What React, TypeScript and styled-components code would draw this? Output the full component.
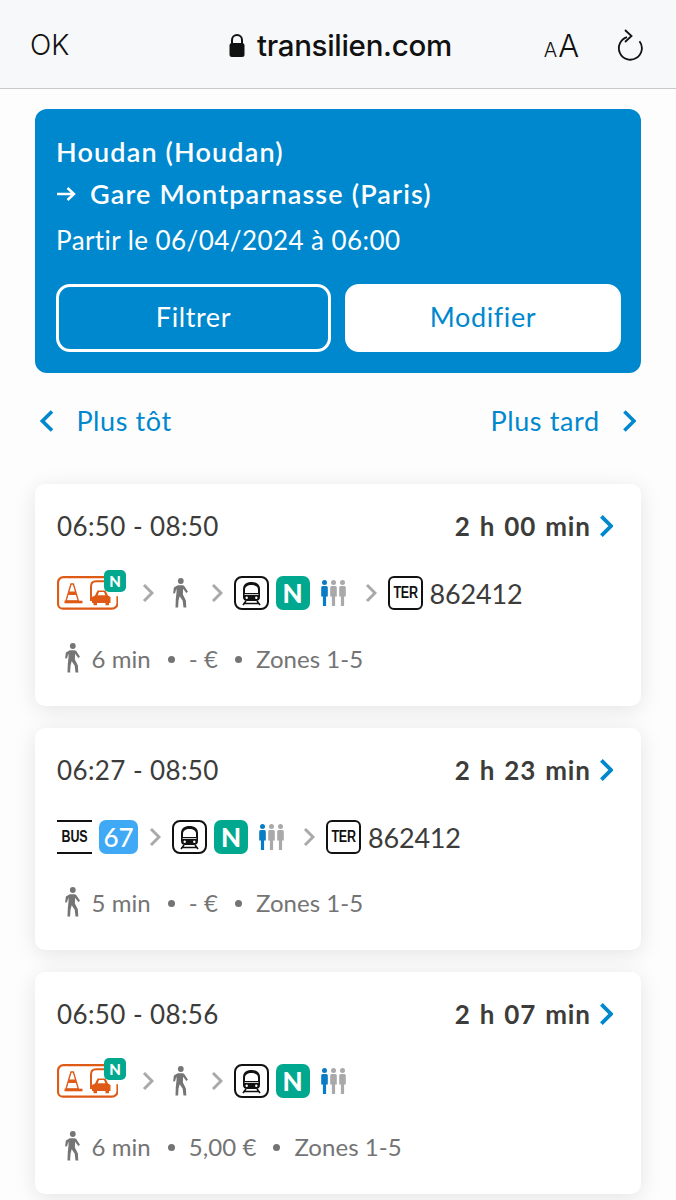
import React from 'react';
import styled, { createGlobalStyle } from 'styled-components';

const GlobalStyle = createGlobalStyle`
  html, body {
    margin: 0;
    background: #fdfdfd;
    font-family: 'Lato', 'Noto Sans', sans-serif;
  }
`;

const Page = styled.div`
  width: 676px;
`;

const BrowserBar = styled.header`
  height: 89px;
  box-sizing: border-box;
  border-bottom: 1px solid #c9c9cb;
  background: #f7f8f9;
  display: flex;
  align-items: center;
  padding: 2px 33px 0 30px;
  color: #111;
  font-family: 'Inter', 'Liberation Sans', sans-serif;
`;

const DoneLabel = styled.span`
  font-size: 28px;
  font-weight: 300;
  width: 199px;
`;

const Address = styled.div`
  display: flex;
  align-items: center;
  gap: 12px;
  font-size: 29.5px;
  font-weight: 500;
  letter-spacing: -0.3px;
  flex: 1;
`;

const TextSize = styled.span`
  font-size: 31px;
  font-weight: 300;
  margin-right: 38px;

  small {
    font-size: 20px;
    margin-right: 1px;
  }
`;

const Content = styled.main`
  padding: 20px 35px 6px;
  display: flex;
  flex-direction: column;
`;

const SearchPanel = styled.section`
  background: #0088ce;
  border-radius: 12px;
  height: 264px;
  box-sizing: border-box;
  padding: 25px 21px 0;
  color: #fff;
`;

const RouteLine = styled.div`
  font-size: 27px;
  font-weight: 600;
  line-height: 36px;
  margin-bottom: 6px;
  display: flex;
  align-items: center;
  gap: 14px;
  letter-spacing: 1.15px;
`;

const DateLine = styled.div`
  font-size: 26px;
  line-height: 36px;
  margin-top: 10px;
  letter-spacing: 0.43px;
`;

const Buttons = styled.div`
  display: grid;
  grid-template-columns: 275px 276px;
  gap: 14px;
  margin-top: 26px;
`;

const PanelButton = styled.button<{ $solid?: boolean }>`
  height: 68px;
  border-radius: 14px;
  border: 3px solid #fff;
  background: ${(p) => (p.$solid ? '#fff' : 'transparent')};
  color: ${(p) => (p.$solid ? '#0088ce' : '#fff')};
  font-family: inherit;
  font-size: 27px;
  letter-spacing: 0.6px;
  padding: 0 0 4px;
`;

const Pager = styled.nav`
  display: flex;
  justify-content: space-between;
  align-items: center;
  height: 40px;
  margin: 28px 0 43px;
  padding: 0 5px;
  color: #0088ce;
  font-size: 27px;
  letter-spacing: 0.6px;
`;

const PagerLink = styled.span`
  display: flex;
  align-items: center;
  gap: 22px;
  line-height: 38px;
`;

const Journeys = styled.div`
  display: flex;
  flex-direction: column;
  gap: 22px;
`;

const Card = styled.article`
  background: #fff;
  border-radius: 10px;
  box-shadow: 0 4px 22px rgba(0, 0, 0, 0.1);
  height: 222px;
  box-sizing: border-box;
  padding: 26px 28px 0 22px;
  color: #3c3c3b;
`;

const CardHead = styled.div`
  display: flex;
  justify-content: space-between;
  align-items: center;
  height: 32px;
  font-size: 26px;
  letter-spacing: 0.4px;
`;

const Duration = styled.span`
  display: flex;
  align-items: center;
  gap: 8px;
  font-weight: 700;
  letter-spacing: 0.8px;
  word-spacing: 2px;
`;

const Steps = styled.div`
  display: flex;
  align-items: center;
  gap: 11px;
  height: 36px;
  margin-top: 33px;
`;

const Pair = styled.span`
  display: flex;
  align-items: center;
  gap: 7px;
`;

const LineBadge = styled.span<{ $bg: string; $size?: number }>`
  display: flex;
  align-items: center;
  justify-content: center;
  width: ${(p) => (p.$size === 67 ? 39 : 34)}px;
  height: 34px;
  border-radius: 7px;
  background: ${(p) => p.$bg};
  color: #fff;
  font-size: ${(p) => (p.$size === 67 ? 26 : 26)}px;
  font-weight: ${(p) => (p.$size === 67 ? 500 : 900)};
`;

const TrainNumber = styled.span`
  font-size: 27px;
  letter-spacing: -0.2px;
`;

const TerBadge = styled.span`
  width: 35px;
  height: 34px;
  box-sizing: border-box;
  border: 2px solid #111;
  border-radius: 6px;
  display: flex;
  align-items: center;
  justify-content: center;
  color: #111;
`;

const BusMark = styled.span`
  width: 35px;
  height: 34px;
  box-sizing: border-box;
  border-top: 2px solid #111;
  border-bottom: 2px solid #111;
  display: flex;
  align-items: center;
  justify-content: center;
  color: #111;
`;

const NarrowLabel = styled.span`
  font-family: 'Liberation Sans', sans-serif;
  font-weight: 700;
  font-size: 16px;
  letter-spacing: -0.3px;
  transform: scaleX(0.78);
`;

const MixedWrap = styled.span`
  position: relative;
  display: block;
  width: 61px;
  height: 34px;
  margin-right: 13px;
`;

const CornerBadge = styled.span`
  position: absolute;
  top: -6px;
  right: -8px;
  width: 22px;
  height: 22px;
  border-radius: 5px;
  background: #00a88f;
  color: #fff;
  font-size: 15px;
  font-weight: 900;
  display: flex;
  align-items: center;
  justify-content: center;
`;

const Meta = styled.div`
  display: flex;
  align-items: center;
  height: 34px;
  margin-top: 30px;
  padding-left: 7px;
  color: #747474;
  font-size: 24px;
  letter-spacing: 0.05px;
`;

const MetaText = styled.span`
  margin-left: 9px;
`;

const MetaDot = styled.span`
  width: 7px;
  height: 7px;
  border-radius: 50%;
  background: #747474;
  margin: 2px 14px 0 17px;
`;

const Chevron = ({ color, size, dir = 'right', weight = 3 }: { color: string; size: number; dir?: 'left' | 'right'; weight?: number }) => (
  <svg width={size * 0.6} height={size} viewBox="0 0 12 20" fill="none" style={{ flexShrink: 0 }}>
    <path d={dir === 'right' ? 'M2 2l8 8-8 8' : 'M10 2l-8 8 8 8'} stroke={color} strokeWidth={weight} />
  </svg>
);

const Walker = ({ height = 30, color = '#757575' }: { height?: number; color?: string }) => (
  <svg width={height * 0.62} height={height} viewBox="0 0 18 30" fill={color} style={{ flexShrink: 0 }}>
    <circle cx="8.5" cy="3" r="2.9" />
    <path d="M5.5 7.2h5.2l1.4 1 3.6 5.6-1.7 1.2-3.2-4.2-.2 5.6 3 6 .4 7.2h-2.8l-.8-6.8-3-4.6-1.2 4.6-.4 6.8H3.2l.3-8.6.8-7.2-.2-3.2-1.3 4.6-2 .2.8-6z" />
  </svg>
);

const TrainIcon = () => (
  <svg width="35" height="34" viewBox="0 0 35 34" fill="none" style={{ flexShrink: 0 }}>
    <rect x="1" y="1" width="33" height="32" rx="7" fill="#fff" stroke="#111" strokeWidth="2" />
    <path d="M17.500 6c5 0 8.500 2.500 8.500 7v8c0 2.500-1.500 4-4 4H13c-2.500 0-4-1.500-4-4v-8c0-4.500 3.500-7 8.500-7z" fill="#111" />
    <path d="M11 13.500c0-2.500 2.500-4.500 6.500-4.500s6.500 2 6.500 4.500V17H11z" fill="#fff" />
    <path d="M10.500 18.500h14" stroke="#fff" strokeWidth="0.800" />
    <circle cx="12.700" cy="21.800" r="1.200" fill="#fff" />
    <circle cx="22.300" cy="21.800" r="1.200" fill="#fff" />
    <path d="M12 25l-3 4M23 25l3 4M10 27.500h15" stroke="#111" strokeWidth="1.600" />
  </svg>
);

const Crowd = () => (
  <svg width="25" height="26" viewBox="0 0 25 26" style={{ flexShrink: 0 }}>
    {[{ x: 3.5, c: '#0a7cc4' }, { x: 12.5, c: '#a9a9a9' }, { x: 21.5, c: '#a9a9a9' }].map(({ x, c }) => (
      <g key={x} fill={c}>
        <circle cx={x} cy="2.500" r="2.500" />
        <path d={`M${x - 3.3} 7.500a1.500 1.500 0 0 1 1.500-1.500h3.600a1.500 1.500 0 0 1 1.500 1.500v9h-1.700V26h-3.200v-9.500h-1.700z`} />
      </g>
    ))}
  </svg>
);

const ConeCar = () => (
  <svg width="61" height="34" viewBox="0 0 61 34" fill="none">
    <path d="M47 1.200H6.500a5.500 5.500 0 0 0-5.500 5.500v21a5 5 0 0 0 5 5h49a5.500 5.500 0 0 0 5.500-5.500v-7" stroke="#de5a16" strokeWidth="2.200" />
    <path d="M14 8h2.400l5 17H9z" fill="#fff" stroke="#de5a16" strokeWidth="1.400" />
    <path d="M12.300 15.500h6.100l1.100 3.600h-8.300z" fill="#de5a16" />
    <path d="M7.500 26h18" stroke="#de5a16" strokeWidth="2.600" />
    <path d="M34 25V10.500C34 7 36 5.200 39 5.200h10" stroke="#de5a16" strokeWidth="2" />
    <path d="M35 27v-6l3-1.500 2.500-5h8l2.500 5 2.500 1.500v6z" fill="#de5a16" />
    <path d="M42 16h5l1.300 3.200h-7.600z" fill="#fff" />
    <path d="M36.500 28h3.500M48.500 28h3.500" stroke="#de5a16" strokeWidth="2.400" />
  </svg>
);

const Mixed = () => (
  <MixedWrap>
    <ConeCar />
    <CornerBadge>N</CornerBadge>
  </MixedWrap>
);

const Sep = () => <Chevron color="#a9a9a9" size={20} />;

const TrainN = () => (
  <Pair>
    <TrainIcon />
    <LineBadge $bg="#00a88f">N</LineBadge>
  </Pair>
);

const Ter = () => (
  <Pair>
    <TerBadge>
      <NarrowLabel>TER</NarrowLabel>
    </TerBadge>
    <TrainNumber>862412</TrainNumber>
  </Pair>
);

const SpacedWalker = styled.span`
  display: flex;
  margin: 0 9px 0 7px;
`;

const SpacedCrowd = styled.span`
  display: flex;
  margin-right: 8px;
`;

type Journey = {
  times: string;
  duration: string;
  walk: string;
  price: string;
  bus?: boolean;
  ter?: boolean;
};

const journeys: Journey[] = [
  { times: '06:50 - 08:50', duration: '2 h 00 min', walk: '6 min', price: '- €', ter: true },
  { times: '06:27 - 08:50', duration: '2 h 23 min', walk: '5 min', price: '- €', bus: true, ter: true },
  { times: '06:50 - 08:56', duration: '2 h 07 min', walk: '6 min', price: '5,00 €' },
];

function JourneyCard({ journey }: { journey: Journey }) {
  return (
    <Card>
      <CardHead>
        <span>{journey.times}</span>
        <Duration>
          {journey.duration}
          <Chevron color="#0088ce" size={24} weight={3.2} />
        </Duration>
      </CardHead>
      <Steps>
        {journey.bus ? (
          <Pair>
            <BusMark>
              <NarrowLabel>BUS</NarrowLabel>
            </BusMark>
            <LineBadge $bg="#3fa9f5" $size={67}>67</LineBadge>
          </Pair>
        ) : (
          <>
            <Mixed />
            <Sep />
            <SpacedWalker>
              <Walker height={30} />
            </SpacedWalker>
          </>
        )}
        <Sep />
        <TrainN />
        <SpacedCrowd>
          <Crowd />
        </SpacedCrowd>
        {journey.ter && (
          <>
            <Sep />
            <Ter />
          </>
        )}
      </Steps>
      <Meta>
        <Walker height={30} />
        <MetaText>{journey.walk}</MetaText>
        <MetaDot />
        <span>{journey.price}</span>
        <MetaDot />
        <span>Zones 1-5</span>
      </Meta>
    </Card>
  );
}

export default function App() {
  return (
    <Page>
      <GlobalStyle />
      <BrowserBar>
        <DoneLabel>OK</DoneLabel>
        <Address>
          <svg width="16" height="23" viewBox="0 0 16 23" fill="#111">
            <path d="M3 10V6a5 5 0 0 1 10 0v4" fill="none" stroke="#111" strokeWidth="2" />
            <rect x="0.500" y="9" width="15" height="14" rx="2.500" />
          </svg>
          transilien.com
        </Address>
        <TextSize>
          <small>A</small>A
        </TextSize>
        <svg width="26" height="33" viewBox="0 0 26 33" fill="none" stroke="#111" strokeWidth="1.800">
          <path d="M10 8.200a11.500 11.500 0 1 0 12.500 4" />
          <path d="M8 1l6.500 6L8 13" />
        </svg>
      </BrowserBar>
      <Content>
        <SearchPanel>
          <RouteLine>Houdan (Houdan)</RouteLine>
          <RouteLine>
            <svg width="20" height="16" viewBox="0 0 20 16" fill="none" stroke="#fff" strokeWidth="2.400">
              <path d="M1 8h17M11.500 2l6.500 6-6.500 6" />
            </svg>
            Gare Montparnasse (Paris)
          </RouteLine>
          <DateLine>Partir le 06/04/2024 à 06:00</DateLine>
          <Buttons>
            <PanelButton>Filtrer</PanelButton>
            <PanelButton $solid>Modifier</PanelButton>
          </Buttons>
        </SearchPanel>
        <Pager>
          <PagerLink>
            <Chevron color="#0088ce" size={24} dir="left" />
            Plus tôt
          </PagerLink>
          <PagerLink>
            Plus tard
            <Chevron color="#0088ce" size={24} />
          </PagerLink>
        </Pager>
        <Journeys>
          {journeys.map((j) => (
            <JourneyCard key={j.times} journey={j} />
          ))}
        </Journeys>
      </Content>
    </Page>
  );
}
